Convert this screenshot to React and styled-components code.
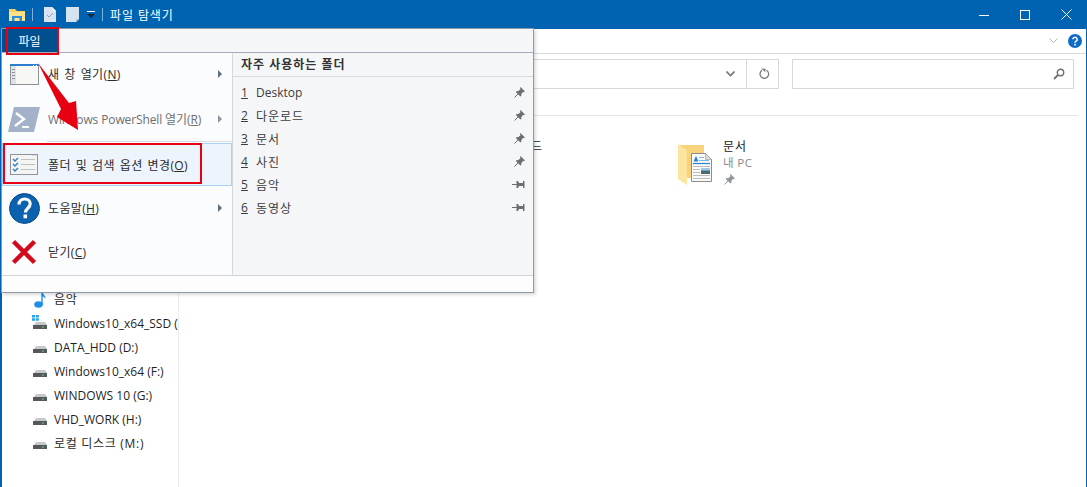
import React from "react";
import styled, { createGlobalStyle } from "styled-components";

const GlobalStyle = createGlobalStyle`
  html, body { margin: 0; height: 100%; overflow: hidden; background: #fff; }
  #root { height: 100%; }
  * { box-sizing: border-box; }
`;

const Page = styled.div`
  position: relative;
  height: 487px;
  display: flex;
  flex-direction: column;
  border-left: 2px solid #0063b1;
  border-right: 1px solid #0063b1;
  font-family: "Open Sans", "Noto Sans CJK KR", sans-serif;
  font-size: 12px;
  color: #1a1a1a;
  background: #fff;
`;

const TitleBar = styled.div`
  height: 29px;
  margin-left: -2px;
  margin-right: -1px;
  padding-left: 9px;
  background: #0063b1;
  display: flex;
  align-items: center;
  color: #fff;
`;

const QuickSlot = styled.span`
  display: flex;
  margin-left: ${(p) => p.$left || 0}px;
`;

const TitleDivider = styled.span`
  width: 1px;
  height: 13px;
  background: #7fb0d8;
  margin-left: ${(p) => p.$left}px;
  margin-right: ${(p) => p.$right}px;
`;

const TitleText = styled.span`
  font-size: 12px;
  letter-spacing: 0.9px;
`;

const WindowButtons = styled.div`
  margin-left: auto;
  display: flex;
  height: 100%;
  padding-right: 15px;
  gap: 31px;
  align-items: center;
`;

const RibbonRow = styled.div`
  height: 25px;
  display: flex;
  align-items: center;
  justify-content: flex-end;
  gap: 10px;
  padding-right: 4px;
  border-bottom: 1px solid #dadbdc;
`;

const AddressRow = styled.div`
  height: 62px;
  padding: 5px 13px 0 48px;
  display: flex;
  align-items: flex-start;
  gap: 13px;
  border-bottom: 1px solid #e5e5e5;
  margin-right: 8px;
`;

const AddressBox = styled.div`
  flex: 0 0 729px;
  height: 30px;
  border: 1px solid #d9d9d9;
  display: flex;
  justify-content: flex-end;
  align-items: center;
`;

const AddressEnd = styled.div`
  width: ${(p) => p.$w}px;
  height: 100%;
  padding-left: ${(p) => (p.$line ? 3 : 0)}px;
  display: flex;
  align-items: center;
  justify-content: center;
  border-left: ${(p) => (p.$line ? "1px solid #d9d9d9" : "none")};
`;

const SearchBox = styled.div`
  flex: 0 0 282px;
  height: 30px;
  border: 1px solid #d9d9d9;
  display: flex;
  align-items: center;
  justify-content: flex-end;
  padding-right: 8px;
`;

const Body = styled.div`
  flex: 1;
  display: flex;
  min-height: 0;
`;

const Nav = styled.div`
  width: 177px;
  border-right: 1px solid #ededed;
  padding: 171px 0 0 29px;
  flex: none;
  overflow: hidden;
`;

const NavRow = styled.div`
  height: 24px;
  display: flex;
  align-items: center;
  gap: 5px;
  white-space: nowrap;
  font-size: 12px;
  color: #1f1f1f;
  letter-spacing: ${(p) => (p.$korean ? "0.7px" : "0")};
`;

const NavIcon = styled.span`
  width: 18px;
  height: 16px;
  flex: none;
  display: flex;
  align-items: center;
  justify-content: center;
`;

const Tiles = styled.div`
  flex: 1;
  display: flex;
  padding: 23px 0 0 271px;
`;

const Tile = styled.div`
  width: 228px;
  height: 50px;
  display: flex;
`;

const TileIcon = styled.div`
  width: 45px;
  padding-top: 5px;
  flex: none;
`;

const TileText = styled.div`
  display: flex;
  flex-direction: column;
  align-items: flex-start;
  line-height: 16px;
  font-size: 12px;
  letter-spacing: 1px;
`;

const TileSub = styled.span`
  color: #8a8a8a;
  font-size: 11.5px;
  letter-spacing: 0.4px;
`;

const TilePin = styled.span`
  display: flex;
  height: 16px;
  padding-left: 1px;
  align-items: center;
`;

const Menu = styled.div`
  position: absolute;
  left: -1px;
  top: 28px;
  width: 533px;
  height: 265px;
  display: flex;
  flex-direction: column;
  background: #fbfcfe;
  border: 1px solid #8e99a8;
  box-shadow: 2px 2px 3px rgba(0, 0, 0, 0.14);
`;

const MenuTabs = styled.div`
  height: 24px;
  flex: none;
  background: #f5f6f7;
  border-bottom: 1px solid #a3adba;
`;

const FileTab = styled.div`
  width: 55px;
  height: 23px;
  background: #00508f;
  color: #fff;
  display: flex;
  align-items: center;
  justify-content: center;
`;

const MenuMain = styled.div`
  flex: 1;
  display: flex;
  min-height: 0;
`;

const LeftPane = styled.div`
  width: 231px;
  flex: none;
  border-right: 1px solid #d5d9de;
`;

const MenuItem = styled.div`
  height: ${(p) => (p.$active ? 43 : 44)}px;
  display: flex;
  align-items: center;
  padding-left: ${(p) => (p.$active ? 7 : 8)}px;
  padding-right: 10px;
  padding-bottom: ${(p) => (p.$raised ? 2 : 0)}px;
  color: ${(p) => (p.$disabled ? "#6f6f6f" : "#2b2b2b")};
  background: ${(p) => (p.$active ? "#edf4fc" : "transparent")};
  border: ${(p) => (p.$active ? "1px solid #a9d1f6" : "none")};
  letter-spacing: ${(p) => (p.$latin ? "-0.12px" : "0.35px")};
  word-spacing: ${(p) => (p.$latin ? "0" : "1.5px")};
`;

const MenuIcon = styled.span`
  width: 38px;
  flex: none;
  display: flex;
  align-items: center;
  margin-left: ${(p) => p.$shift || 0}px;
  margin-right: ${(p) => -(p.$shift || 0)}px;
`;

const SubArrow = styled.span`
  margin-left: auto;
  width: 0;
  height: 0;
  border-left: 4px solid ${(p) => (p.$dim ? "#8a96a3" : "#5f6f80")};
  border-top: 4px solid transparent;
  border-bottom: 4px solid transparent;
`;

const MenuRule = styled.div`
  height: 1px;
  margin: 0 0 1px 45px;
  background: #d9dde2;
`;

const RightPane = styled.div`
  flex: 1;
  background: #f5f6f8;
  display: flex;
  flex-direction: column;
`;

const RightHeader = styled.div`
  height: 24px;
  padding: 0 0 2px 8px;
  display: flex;
  align-items: center;
  font-weight: 700;
  color: #333;
  border-bottom: 1px solid #d9dadb;
  letter-spacing: 1px;
`;

const RecentList = styled.div`
  padding: 4px 8px 0 8px;
`;

const RecentRow = styled.div`
  height: 23px;
  display: flex;
  align-items: center;
  color: #3c3c3c;
`;

const RecentNum = styled.u`
  width: 15px;
`;

const RecentName = styled.span`
  letter-spacing: ${(p) => (p.$korean ? "1px" : "0")};
`;

const PinSlot = styled.span`
  margin-left: auto;
  display: flex;
`;

const MenuFooter = styled.div`
  height: 17px;
  flex: none;
  background: #fdfdfe;
  border-top: 1px solid #cfd4da;
`;

const Annotation = styled.div`
  position: absolute;
  left: ${(p) => p.$x}px;
  top: ${(p) => p.$y}px;
  width: ${(p) => p.$w}px;
  height: ${(p) => p.$h}px;
  border: 2px solid #e60012;
  pointer-events: none;
`;

const ArrowLayer = styled.svg`
  position: absolute;
  left: 28px;
  top: 60px;
`;

const FolderSmall = () => (
  <svg width="17" height="14" viewBox="0 0 17 14">
    <path d="M0 1h6l2 2h8v10H0z" fill="#f6cf5f" />
    <path d="M0 4h16v9H0z" fill="#fde08a" />
    <path d="M3 8h10v5h-2.500v-3h-5v3H3z" fill="#2b8fd8" />
  </svg>
);

const DocCheck = () => (
  <svg width="12" height="15" viewBox="0 0 12 15">
    <path d="M0 0h8l4 4v11H0z" fill="#d9e4f0" />
    <path d="M8 0v4h4z" fill="#f5f8fb" />
    <path d="M3 8l2 2 4-4" fill="none" stroke="#8ea3b8" strokeWidth="1" />
  </svg>
);

const DocBlank = () => (
  <svg width="13" height="15" viewBox="0 0 13 15">
    <path d="M0 0h13v12l-3 3H0z" fill="#d5e2f0" />
    <path d="M10 15v-3h3z" fill="#aebfd1" />
  </svg>
);

const QuickDrop = () => (
  <svg width="8" height="8" viewBox="0 0 8 8">
    <path d="M0 0h8v1H0z" fill="#fff" />
    <path d="M0 3h8L4 7z" fill="#10263d" />
  </svg>
);

const Minimize = () => (
  <svg width="10" height="10" viewBox="0 0 10 10">
    <path d="M0 5.500h10" stroke="#fff" />
  </svg>
);

const Maximize = () => (
  <svg width="10" height="10" viewBox="0 0 10 10">
    <rect x="0.500" y="0.500" width="9" height="9" fill="none" stroke="#fff" />
  </svg>
);

const CloseGlyph = () => (
  <svg width="11" height="11" viewBox="0 0 11 11">
    <path d="M0.500 0.500l10 10M10.500 0.500l-10 10" stroke="#fff" />
  </svg>
);

const ChevronSmall = ({ color = "#b5b5b5", width = 1 }) => (
  <svg width="9" height="6" viewBox="0 0 9 6">
    <path d="M0.500 0.500l4 4 4-4" fill="none" stroke={color} strokeWidth={width} />
  </svg>
);

const HelpSmall = () => (
  <svg width="14" height="14" viewBox="0 0 14 14">
    <circle cx="7" cy="7" r="7" fill="#0f6cc4" />
    <path d="M4.800 5.300a2.200 2 0 1 1 3.300 1.800c-.8.500-1.100.9-1.100 1.700" fill="none" stroke="#fff" strokeWidth="1.500" />
    <rect x="6.200" y="9.800" width="1.600" height="1.700" fill="#fff" />
  </svg>
);

const Refresh = () => (
  <svg width="11" height="12" viewBox="0 0 11 12">
    <path d="M7.500 2.300a4.300 4.300 0 1 1-4.500.1" fill="none" stroke="#7a7a7a" strokeWidth="1.300" />
    <path d="M2 0.500l4.500.3v3.500z" fill="#7a7a7a" />
  </svg>
);

const SearchGlyph = () => (
  <svg width="12" height="12" viewBox="0 0 12 12">
    <circle cx="7.500" cy="4.500" r="3.200" fill="none" stroke="#6f6f6f" strokeWidth="1.400" />
    <path d="M5 7l-4 4" stroke="#6f6f6f" strokeWidth="1.800" />
  </svg>
);

const MusicNote = () => (
  <svg width="12" height="17" viewBox="0 0 12 17">
    <ellipse cx="4.500" cy="13.500" rx="4.200" ry="3.300" fill="#1e8fe6" />
    <path d="M7.300 1h1.400c.2 2.500 3.300 3.500 2.800 7-.6-1.500-1.700-2.200-2.800-2.500V14H7.300z" fill="#1e8fe6" />
  </svg>
);

const Drive = ({ windows }) => (
  <svg width="16" height="16" viewBox="0 0 16 16">
    {windows && <path d="M0 0h3v2.500H0zM3.800 0h3v2.500h-3zM0 3.300h3v2.500H0zM3.800 3.300h3v2.500h-3z" fill="#1fa3ec" />}
    <path d="M2 10l2-3h9l2 3z" fill="#c4c8cb" />
    <rect x="1" y="10" width="14" height="4" fill="#54585c" />
    <rect x="10" y="11.500" width="2" height="1" fill="#5bd25b" />
  </svg>
);

const NewWindowIcon = () => (
  <svg width="29" height="21" viewBox="0 0 29 21">
    <rect x="0.500" y="0.500" width="28" height="20" fill="#f7f7f5" stroke="#8d9299" />
    <rect x="0" y="0" width="29" height="2" fill="#2a7fd0" />
    <path d="M23 1h1v1h-1zM26 1h1v1h-1z" fill="#fff" />
    <rect x="1" y="2" width="5" height="18" fill="#dfe2e6" />
    <path d="M2 5h3v1H2zM2 8h3v1H2zM2 11h3v1H2zM2 14h3v1H2z" fill="#8d9299" />
  </svg>
);

const PowerShellIcon = () => (
  <svg width="32" height="25" viewBox="0 0 32 25">
    <path d="M6 0h26l-6 25H0z" fill="#a3b1c9" />
    <path d="M8 6l8 6-9 7" fill="none" stroke="#fff" strokeWidth="2.400" />
    <path d="M14 19h7v2h-7z" fill="#fff" />
  </svg>
);

const OptionsIcon = () => (
  <svg width="28" height="21" viewBox="0 0 28 21">
    <rect x="0.500" y="0.500" width="27" height="20" fill="#f4f4f2" stroke="#8f949a" />
    <path d="M3 5l2 2 3-3M3 10l2 2 3-3M3 15l2 2 3-3" fill="none" stroke="#2d7fc9" strokeWidth="1.400" />
    <path d="M11 5.500h14M11 10.500h14M11 15.500h14" stroke="#bcc1c6" />
    <path d="M22 1.500h1M25 1.500h1" stroke="#c0c4c8" />
  </svg>
);

const HelpIcon = () => (
  <svg width="31" height="31" viewBox="0 0 31 31">
    <circle cx="15.500" cy="15.500" r="15" fill="#0b62ae" stroke="#0a4d8c" />
    <path d="M10 11.500c0-3.500 2.600-5.500 5.700-5.500 3.300 0 5.500 2 5.500 4.800 0 4.500-4.700 4.300-4.700 8.700" fill="none" stroke="#fff" strokeWidth="3.200" />
    <rect x="14.500" y="21.500" width="3.600" height="3.800" fill="#fff" />
  </svg>
);

const RedCross = () => (
  <svg width="26" height="26" viewBox="0 0 26 26">
    <path d="M2.500 2.500l21 21M23.500 2.500l-21 21" stroke="#d20a1e" strokeWidth="4.400" />
  </svg>
);

const PinDiagonal = ({ color = "#6a6e73" }) => (
  <svg width="11" height="11" viewBox="0 0 11 11">
    <path d="M6.500 0L11 4.500 9.800 5.300 9 4.800 7.200 7.500 7.400 8.800 6.400 9.600 1.800 5 2.800 4 4 4.200 6.500 2.200 6 1z" fill={color} />
    <path d="M4 7L0.500 10.500" stroke={color} />
  </svg>
);

const PinFlat = () => (
  <svg width="13" height="9" viewBox="0 0 13 9">
    <path d="M0 4.500h6" stroke="#6a6e73" />
    <path d="M4.500 1h1.500l1 2h4V1h1.500v7H11V6H7L6 8H4.500z" fill="#6a6e73" />
  </svg>
);

const TileFolder = () => (
  <svg width="35" height="41" viewBox="0 0 35 41">
    <path d="M0 1h26v33H0z" fill="#f6d37c" />
    <path d="M0 0l9 6v35l-9-6z" fill="#fde59f" />
    <path d="M13.500 9.500h14l6 6v22h-20z" fill="#fafafa" stroke="#8c8c8c" />
    <path d="M27.500 9.500l6 6h-6z" fill="#dcdcdc" stroke="#9a9a9a" strokeWidth="0.600" />
    <path d="M15.500 17.500l2.500-5.500 2.500 5.500z" fill="#1e88d8" />
    <path d="M21 13.500h5M21 16.500h10" stroke="#7fb5e0" />
    <path d="M15 19.500h17" stroke="#1e88d8" strokeWidth="1.200" />
    <path d="M15 22.500h17M15 25.500h7M15 28.500h7M15 31.500h17M15 34.500h17" stroke="#bcbcbc" />
    <rect x="23" y="24" width="9" height="6" fill="#466b70" />
    <rect x="23" y="24" width="9" height="2.500" fill="#9fc8e8" />
  </svg>
);

const recentFolders = [
  { name: "Desktop", pinned: true },
  { name: "다운로드", pinned: true, korean: true },
  { name: "문서", pinned: true, korean: true },
  { name: "사진", pinned: true, korean: true },
  { name: "음악", pinned: false, korean: true },
  { name: "동영상", pinned: false, korean: true },
];

const drives = [
  { name: "Windows10_x64_SSD (C:)", windows: true },
  { name: "DATA_HDD (D:)" },
  { name: "Windows10_x64 (F:)" },
  { name: "WINDOWS 10 (G:)" },
  { name: "VHD_WORK (H:)" },
  { name: "로컬 디스크 (M:)", korean: true },
];

function FileMenu() {
  return (
    <Menu>
      <MenuTabs>
        <FileTab>파일</FileTab>
      </MenuTabs>
      <MenuMain>
        <LeftPane>
          <MenuItem $raised>
            <MenuIcon><NewWindowIcon /></MenuIcon>
            <span>새 창 열기(<u>N</u>)</span>
            <SubArrow />
          </MenuItem>
          <MenuItem $disabled $latin>
            <MenuIcon $shift={-2}><PowerShellIcon /></MenuIcon>
            <span>Windows PowerShell 열기(<u>R</u>)</span>
            <SubArrow $dim />
          </MenuItem>
          <MenuRule />
          <MenuItem $active>
            <MenuIcon><OptionsIcon /></MenuIcon>
            <span>폴더 및 검색 옵션 변경(<u>O</u>)</span>
          </MenuItem>
          <MenuItem>
            <MenuIcon $shift={-1}><HelpIcon /></MenuIcon>
            <span>도움말(<u>H</u>)</span>
            <SubArrow />
          </MenuItem>
          <MenuItem>
            <MenuIcon $shift={1}><RedCross /></MenuIcon>
            <span>닫기(<u>C</u>)</span>
          </MenuItem>
        </LeftPane>
        <RightPane>
          <RightHeader>자주 사용하는 폴더</RightHeader>
          <RecentList>
            {recentFolders.map((f, i) => (
              <RecentRow key={f.name}>
                <RecentNum>{i + 1}</RecentNum>
                <RecentName $korean={f.korean}>{f.name}</RecentName>
                <PinSlot>{f.pinned ? <PinDiagonal /> : <PinFlat />}</PinSlot>
              </RecentRow>
            ))}
          </RecentList>
        </RightPane>
      </MenuMain>
      <MenuFooter />
    </Menu>
  );
}

export default function App() {
  return (
    <>
      <GlobalStyle />
      <Page>
        <TitleBar>
          <QuickSlot><FolderSmall /></QuickSlot>
          <TitleDivider $left={6} $right={0} />
          <QuickSlot $left={11}><DocCheck /></QuickSlot>
          <QuickSlot $left={10}><DocBlank /></QuickSlot>
          <QuickSlot $left={8}><QuickDrop /></QuickSlot>
          <TitleDivider $left={7} $right={7} />
          <TitleText>파일 탐색기</TitleText>
          <WindowButtons>
            <Minimize />
            <Maximize />
            <CloseGlyph />
          </WindowButtons>
        </TitleBar>
        <RibbonRow>
          <ChevronSmall />
          <HelpSmall />
        </RibbonRow>
        <AddressRow>
          <AddressBox>
            <AddressEnd $w={32}><ChevronSmall color="#777" width={1.6} /></AddressEnd>
            <AddressEnd $w={32} $line><Refresh /></AddressEnd>
          </AddressBox>
          <SearchBox><SearchGlyph /></SearchBox>
        </AddressRow>
        <Body>
          <Nav>
            <NavRow $korean>
              <NavIcon><MusicNote /></NavIcon>
              <span>음악</span>
            </NavRow>
            {drives.map((d) => (
              <NavRow key={d.name} $korean={d.korean}>
                <NavIcon><Drive windows={d.windows} /></NavIcon>
                <span>{d.name}</span>
              </NavRow>
            ))}
          </Nav>
          <Tiles>
            <Tile>
              <TileIcon />
              <TileText>
                <span>다운로드</span>
              </TileText>
            </Tile>
            <Tile>
              <TileIcon><TileFolder /></TileIcon>
              <TileText>
                <span>문서</span>
                <TileSub>내 PC</TileSub>
                <TilePin><PinDiagonal color="#8f969c" /></TilePin>
              </TileText>
            </Tile>
          </Tiles>
        </Body>
        <FileMenu />
        <Annotation $x={4} $y={27} $w={53} $h={28} />
        <Annotation $x={1} $y={143} $w={199} $h={41} />
        <ArrowLayer width="60" height="80" viewBox="0 0 60 80">
          <path d="M8 3L39 43 46 41 48 70 27 57 31 49z" fill="#e60012" />
        </ArrowLayer>
      </Page>
    </>
  );
}
